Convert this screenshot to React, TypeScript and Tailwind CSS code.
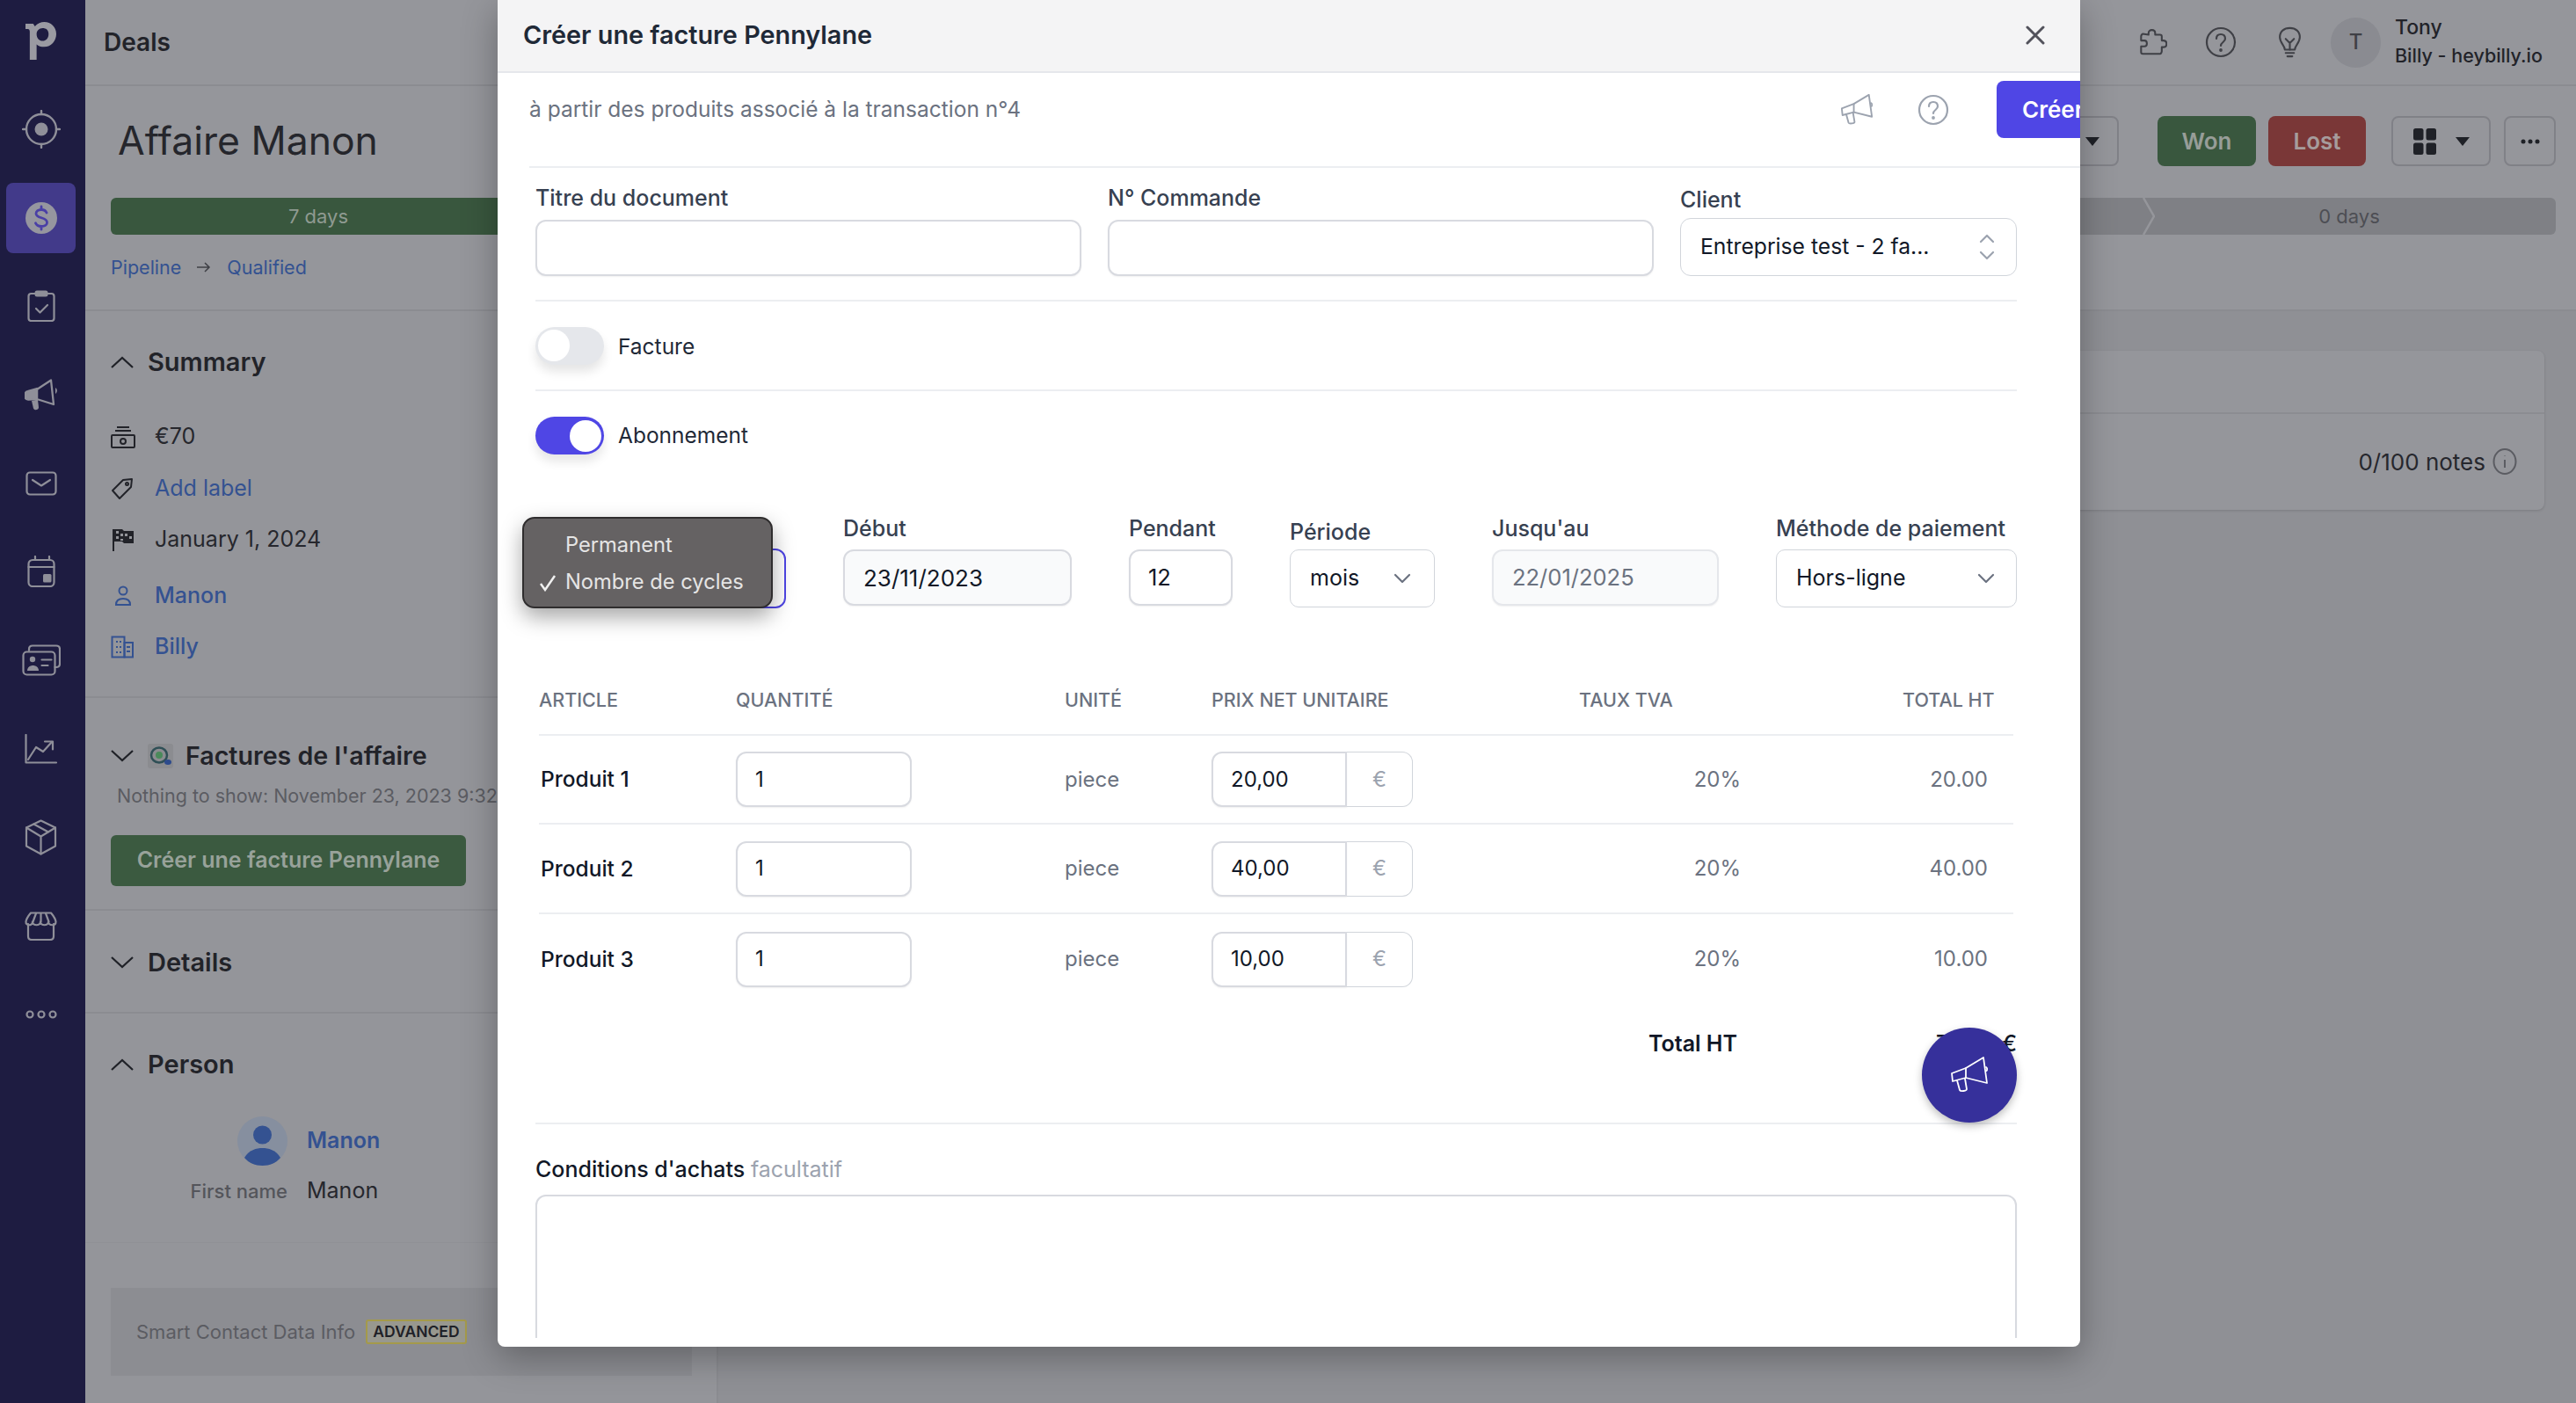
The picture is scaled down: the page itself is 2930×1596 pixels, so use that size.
import React from "react";

const S = ({ w, h, vb, cls, children, sw = 2 }: any) => (
  <svg width={w} height={h} viewBox={vb} fill="none" stroke="currentColor" strokeWidth={sw} strokeLinecap="round" strokeLinejoin="round" className={cls}>
    {children}
  </svg>
);

const Logo = () => (
  <svg width="35" height="43" viewBox="0 0 36 44" className="text-[#9a9aa2]" fill="currentColor">
    <path fillRule="evenodd" d="M0 2h9l2 3c3-3 7-5 11-5 8 0 14 6 14 14s-6 15-14 15c-4 0-7-1-9-3v18H5V11c0-2-1-3-2-3H0V2zm13 12c0 5 3 8 7 8s7-3 7-8-3-7-7-7-7 3-7 7z" />
  </svg>
);

const NAV = [
  <S w={44} h={44} vb="0 0 44 44" key="t" sw={2.4}>
    <circle cx="22" cy="22" r="17" />
    <circle cx="22" cy="22" r="7.500" fill="currentColor" stroke="none" />
    <path d="M22 1v4M22 39v4M1 22h4M39 22h4" />
  </S>,
  <svg width="36" height="36" viewBox="0 0 36 36" key="d">
    <circle cx="18" cy="18" r="18" fill="#96969f" />
    <path d="M24 12c-1-2.500-3-3.500-6-3.500-3.500 0-6 1.800-6 4.500 0 6 12.500 3.500 12.500 10 0 2.800-2.800 4.500-6.500 4.500-3.200 0-5.500-1.200-6.500-3.800M18 5v3.500M18 27.500V31" fill="none" stroke="#4a3fa6" strokeWidth="2.800" strokeLinecap="round" />
  </svg>,
  <S w={32} h={36} vb="0 0 32 36" key="c" sw={2.2}>
    <path d="M9 4H4.500C2.800 4 1.500 5.300 1.500 7v25c0 1.700 1.300 3 3 3h23c1.700 0 3-1.300 3-3V7c0-1.700-1.300-3-3-3H23" />
    <rect x="8.500" y="0.500" width="15" height="7" rx="2.500" fill="currentColor" stroke="none" />
    <path d="M10 21l4.500 4.500L23 17" />
  </S>,
  <svg width="38" height="36" viewBox="0 0 38 36" key="m" fill="none" stroke="currentColor" strokeWidth="2.300" strokeLinejoin="round">
    <path d="M14 12L30 1.500 33 29l-19-6z" />
    <path d="M14 11L3.500 14C1.500 14.500 0.500 16 0.500 18v2c0 2 1.500 3.500 3.500 3.500L14 23z" fill="currentColor" />
    <path d="M8 25l7-1.500 1 9c0 3-5 4-6 1z" fill="currentColor" stroke="none" />
    <path d="M35 10c2.500 1.500 2.500 5 0 7z" fill="currentColor" stroke="none" />
  </svg>,
  <S w={36} h={28} vb="0 0 36 28" key="e" sw={2.2}>
    <rect x="1.500" y="1.500" width="33" height="25" rx="3.500" />
    <path d="M8 10l10 6.500L28 10" />
  </S>,
  <S w={32} h={36} vb="0 0 32 36" key="cal" sw={2.2}>
    <rect x="1.500" y="5" width="29" height="30" rx="4.500" />
    <path d="M1.500 13h29M9 1V5M25 1V5" />
    <rect x="18" y="21" width="9.500" height="9.500" rx="1.500" fill="currentColor" stroke="none" />
  </S>,
  <S w={44} h={36} vb="0 0 44 36" key="id" sw={2.2}>
    <path d="M8 7V5.500C8 3 9.500 1.500 12 1.500H39c2.500 0 4 1.500 4 4V22c0 2.500-1.500 4-4 4h-1.500" />
    <rect x="1.500" y="8.500" width="36" height="26" rx="4" />
    <circle cx="12" cy="17" r="3.200" fill="currentColor" stroke="none" />
    <path d="M6 30c0-8 13-8 13 0z" fill="currentColor" stroke="none" />
    <path d="M22.500 17.500h11M22.500 24h7" />
  </S>,
  <S w={38} h={34} vb="0 0 38 34" key="ch" sw={2.2}>
    <path d="M1.500 1V32.500H36" />
    <path d="M4 29l9-14 8 5 10-11" />
    <path d="M23 8.500h9v9" />
  </S>,
  <S w={37} h={41} vb="0 0 37 41" key="b" sw={2.2}>
    <path d="M18.500 1.500l16.500 8v21l-16.500 9-16.500-9v-21z" />
    <path d="M2 9.500l16.500 10 16.500-10M18.500 19.500v20M10.500 5.500l16.500 9" />
  </S>,
  <S w={37} h={33} vb="0 0 37 33" key="s" sw={2.2}>
    <path d="M4 14v14c0 2.500 1.500 4 4 4h21c2.500 0 4-1.500 4-4V14" />
    <path d="M7 1.500h23c2.500 3 5 6 5.500 10 0 5-8 5-8.500 0 0 5-9 5-9 0 0 5-9 5-9 0C9 16.500 1 16.500 1.500 11.500 2 7.500 4.500 4.500 7 1.500z" />
    <path d="M13 2l-3.500 9.500M18.500 2v9.500M24 2l3.500 9.500" />
  </S>,
  <S w={36} h={10} vb="0 0 36 10" key="o" sw={2.2}>
    <circle cx="5" cy="5" r="3.500" />
    <circle cx="18" cy="5" r="3.500" />
    <circle cx="31" cy="5" r="3.500" />
  </S>,
];

const Chev = ({ up }: { up?: boolean }) => (
  <svg width="26" height="14" viewBox="0 0 26 14" fill="none" stroke="#1f2127" strokeWidth="2.2" className="shrink-0">
    <path d={up ? "M1 13L13 2l12 11" : "M1 1l12 11L25 1"} />
  </svg>
);

const MiniChev = () => (
  <svg width="20" height="12" viewBox="0 0 20 12" fill="none" stroke="#6b7280" strokeWidth="2.2" strokeLinecap="round" strokeLinejoin="round">
    <path d="M2 2l8 8 8-8" />
  </svg>
);

const Megaphone = ({ cls, w = 34, h = 34, sw = 2 }: any) => (
  <svg width={w} height={h} viewBox="0 0 42 42" fill="none" stroke="currentColor" strokeWidth={sw} strokeLinejoin="round" strokeLinecap="round" className={cls}>
    <path d="M1 19l16-6L37 1l4 29-24-6-15 4z" />
    <path d="M17 13v11" />
    <path d="M7 27l3 11c1 2 8 1 8-1l-2-12" />
    <path d="M40 12c1.500 1 1.500 3 .500 4" />
  </svg>
);

const Question = ({ cls, size = 36, sw = 2.2 }: any) => (
  <svg width={size} height={size} viewBox="0 0 36 36" fill="none" stroke="currentColor" strokeWidth={sw} strokeLinecap="round" className={cls}>
    <circle cx="18" cy="18" r="16" />
    <path d="M13 14c0-3 2-5 5-5s5 2 5 5c0 4-5 4-5 8" />
    <circle cx="18" cy="27" r="0.8" fill="currentColor" />
  </svg>
);

const SummaryRow = ({ icon, text, link, medium, cls }: any) => (
  <div className={`flex h-[40px] items-center ${cls}`}>
    <div className="flex w-[50px] shrink-0 items-center">{icon}</div>
    <span className={`text-[25px] ${link ? "text-[#345291]" : "text-[#26272d]"} ${medium ? "font-medium" : ""}`}>{text}</span>
  </div>
);

const SectionHead = ({ title, up, cls }: any) => (
  <div className={`flex h-[40px] items-center ${cls}`}>
    <Chev up={up} />
    <span className="ml-[16px] text-[29px] font-semibold text-[#222329]">{title}</span>
  </div>
);

const Label = ({ children, cls = "" }: any) => <div className={`h-[30px] text-[25px] font-medium leading-[30px] text-[#374151] ${cls}`}>{children}</div>;

const boxCls = "rounded-[12px] border-2 border-[#d8dae0] bg-white shadow-[0_1px_2px_rgba(0,0,0,0.06)]";

const FieldInput = ({ cls = "", text, tcls = "text-[#111827]", pl = "pl-[21px]", size = "text-[24px]" }: any) => (
  <div className={`flex items-center ${boxCls} ${pl} ${size} ${tcls} ${cls}`}>{text}</div>
);

const Toggle = ({ on, label, lcls = "" }: any) => (
  <div className="flex items-center">
    <div className={`flex h-[43px] w-[78px] items-center rounded-full px-[3px] shadow-[0_8px_12px_rgba(0,0,0,0.10)] ${on ? "justify-end bg-[#4f46e5]" : "justify-start bg-[#e5e7eb]"}`}>
      <div className="h-[36px] w-[36px] rounded-full bg-white" />
    </div>
    <span className={`ml-[16px] text-[24.500px] text-[#1f2937] ${lcls}`}>{label}</span>
  </div>
);

const ROWS = [
  { name: "Produit 1", price: "20,00", total: "20.00", h: "h-[101px]" },
  { name: "Produit 2", price: "40,00", total: "40.00", h: "h-[102px]" },
  { name: "Produit 3", price: "10,00", total: "10.00", h: "h-[102px]" },
];

export default function App() {
  return (
    <div className="relative flex h-[1596px] w-[2930px] overflow-hidden bg-[#8f9095] font-['Inter',sans-serif]">
      {/* Sidebar */}
      <aside className="flex w-[97px] shrink-0 flex-col bg-[#1e1c41] pl-[7px] text-[#8f8f99]">
        <div className="flex h-[107px] w-[79px] items-start justify-center pt-[25px]">
          <Logo />
        </div>
        <nav className="flex w-[79px] flex-col items-center gap-[20.7px]">
          {NAV.map((ic, i) => (
            <div key={i} className={`flex h-[80px] w-[79px] items-center justify-center rounded-[8px] ${i === 1 ? "bg-[#423a8a]" : ""}`}>
              {ic}
            </div>
          ))}
        </nav>
      </aside>

      {/* Main */}
      <div className="flex min-w-0 flex-1 flex-col">
        <header className="flex h-[98px] shrink-0 items-center justify-between border-b-2 border-[#8b8c91] bg-[#95969b] pl-[21px] pr-[38px]">
          <span className="text-[28px] font-semibold text-[#222329]">Deals</span>
          <div className="flex items-center">
            <svg width="33" height="32" viewBox="0 0 34 34" fill="none" stroke="#3f4046" strokeWidth="2.2" strokeLinejoin="round">
              <path d="M12 8V6c0-5 8-5 8 0v2h6c1 0 2 1 2 2v5h2c5 0 5 8 0 8h-2v5c0 1-1 3-2 3H5c-1 0-2-1-2-2v-7h4c4 0 4-7 0-7H3v-5c0-1 1-3 2-3z" />
            </svg>
            <Question cls="ml-[43px] text-[#3f4046]" size={36} />
            <svg className="ml-[47px]" width="27" height="36" viewBox="0 0 28 38" fill="none" stroke="#3f4046" strokeWidth="2.2" strokeLinecap="round" strokeLinejoin="round">
              <path d="M8 28c0-5-6-8-6-15C2 6 7 2 14 2s12 4 12 11c0 7-6 10-6 15z" />
              <path d="M9 15l5 5 5-5M14 20v8M9 32h10M11 36h6" />
            </svg>
            <div className="ml-[33px] flex h-[57px] w-[57px] items-center justify-center rounded-full bg-[#8a8b91] text-[24px] font-medium text-[#3f4046]">T</div>
            <div className="mb-[2px] ml-[16px] flex w-[168px] flex-col gap-[8px]">
              <span className="text-[23px] font-medium leading-[24px] text-[#222329]">Tony</span>
              <span className="whitespace-nowrap text-[21.500px] font-medium leading-[24px] text-[#222329]">Billy - heybilly.io</span>
            </div>
          </div>
        </header>

        <section className="h-[256px] shrink-0 border-b-2 border-[#8b8c91] bg-[#95969b] pl-[29px] pr-[23px] pt-[34px]">
          <div className="flex h-[57px] items-center justify-between">
            <h1 className="ml-[8px] text-[44.500px] font-normal text-[#25262c]">Affaire Manon</h1>
            <div className="flex h-[57px] items-center">
              <div className="flex h-[57px] w-[60px] items-center justify-center rounded-[8px] border-2 border-[#808187]">
                <svg width="16" height="10" viewBox="0 0 16 10" fill="#1f2127"><path d="M0 0h16L8 10z" /></svg>
              </div>
              <button className="ml-[44px] h-[57px] w-[112px] rounded-[8px] bg-[#39573e] text-[26px] font-semibold text-[#979d98]">Won</button>
              <button className="ml-[14px] h-[57px] w-[111px] rounded-[8px] bg-[#7a3737] text-[26px] font-semibold text-[#a69c9c]">Lost</button>
              <div className="ml-[29px] flex h-[57px] w-[113px] items-center justify-center gap-[22px] rounded-[8px] border-2 border-[#808187]">
                <svg width="26" height="30" viewBox="0 0 26 30" fill="#1f2127">
                  <rect width="11.500" height="13.500" rx="2.500" />
                  <rect x="14.500" width="11.500" height="13.500" rx="2.500" />
                  <rect y="16.500" width="11.500" height="13.500" rx="2.500" />
                  <rect x="14.500" y="16.500" width="11.500" height="13.500" rx="2.500" />
                </svg>
                <svg width="16" height="10" viewBox="0 0 16 10" fill="#1f2127"><path d="M0 0h16L8 10z" /></svg>
              </div>
              <div className="ml-[15px] flex h-[57px] w-[59px] items-center justify-center rounded-[8px] border-2 border-[#808187]">
                <svg width="22" height="6" viewBox="0 0 22 6" fill="#1f2127"><circle cx="3" cy="3" r="2.500" /><circle cx="11" cy="3" r="2.500" /><circle cx="19" cy="3" r="2.500" /></svg>
              </div>
            </div>
          </div>
          <div className="mt-[36px] flex h-[42px] overflow-hidden rounded-[6px] text-[22px]">
            <div className="flex w-[472px] items-center justify-center bg-[#39573e] text-[#8f9a91]">7 days</div>
            <div className="flex-1 bg-[#7f8085]" />
            <div className="relative flex w-[470px] items-center justify-center bg-[#7f8085] text-[#4d4e54]">
              <svg width="14" height="42" viewBox="0 0 14 42" fill="none" stroke="#95969b" strokeWidth="2.500" className="absolute left-0 top-0">
                <path d="M1 0l12 21L1 42" />
              </svg>
              0 days
            </div>
          </div>
          <div className="mt-[22px] flex h-[30px] items-center text-[21.500px] text-[#345291]">
            <span>Pipeline</span>
            <svg className="mx-[18px]" width="16" height="12" viewBox="0 0 16 12" fill="none" stroke="#3f4046" strokeWidth="1.500"><path d="M0 6h14M9 1l5 5-5 5" /></svg>
            <span>Qualified</span>
          </div>
        </section>

        <div className="flex min-h-0 flex-1">
          {/* Left column */}
          <div className="flex w-[720px] shrink-0 flex-col border-r-2 border-[#8b8c91] bg-[#94959a]">
            <div className="h-[440px] border-b-2 border-[#8b8c91] pl-[29px] pt-[38px]">
              <SectionHead title="Summary" up />
              <SummaryRow
                cls="mt-[45px]"
                text="€70"
                icon={
                  <svg width="28" height="26" viewBox="0 0 28 26" fill="none" stroke="#222329" strokeWidth="2"><path d="M7 2h14M5 6h18" /><rect x="1" y="11" width="26" height="14" rx="1" /><circle cx="14" cy="18" r="3" /></svg>
                }
              />
              <SummaryRow
                cls="mt-[19px]"
                text="Add label"
                link
                icon={
                  <svg width="26" height="26" viewBox="0 0 26 26" fill="none" stroke="#222329" strokeWidth="2" strokeLinejoin="round"><path d="M2 15L14 3l10-1-1 9-13 13z" /><circle cx="18.500" cy="7.500" r="1.500" /></svg>
                }
              />
              <SummaryRow
                cls="mt-[18px]"
                text="January 1, 2024"
                icon={
                  <svg width="26" height="28" viewBox="0 0 26 28" fill="#222329"><path d="M2 2h2v25H2z" /><path fillRule="evenodd" d="M4 2h9l2 2h11v14H15l-2-2H4zM6 4v3h3V4zm5 3v3h3V7zm-5 3v3h3v-3zm10-3v3h3V7zm5 3v3h3v-3zm-10 3v2h3v-2z" /></svg>
                }
              />
              <SummaryRow
                cls="mt-[24px]"
                text="Manon"
                link
                medium
                icon={
                  <svg className="ml-[4px]" width="20" height="24" viewBox="0 0 20 24" fill="none" stroke="#345291" strokeWidth="2"><circle cx="10" cy="6" r="4.500" /><path d="M2 22c0-4 2-7 8-7s8 3 8 7z" /></svg>
                }
              />
              <SummaryRow
                cls="mt-[18px]"
                text="Billy"
                link
                medium
                icon={
                  <svg width="26" height="26" viewBox="0 0 26 26" fill="none" stroke="#345291" strokeWidth="2"><rect x="1.500" y="1.500" width="14" height="23" /><rect x="15.500" y="8" width="9.500" height="16.500" /><path d="M6 7h2M10 7h2M6 13h2M10 13h2M6 19h2M10 19h2M18 13h4M18 18h4" /></svg>
                }
              />
            </div>

            <div className="h-[242px] border-b-2 border-[#8b8c91] pl-[29px] pt-[46px]">
              <div className="flex h-[40px] items-center">
                <Chev />
                <div className="ml-[16px] flex h-[28px] w-[29px] items-center justify-center rounded-[3px] bg-[#8b8c90]">
                  <svg width="26" height="24" viewBox="0 0 26 24">
                    <ellipse cx="11" cy="11" rx="9" ry="8.500" fill="none" stroke="#2f4f56" strokeWidth="2.500" />
                    <ellipse cx="11" cy="11" rx="4" ry="4" fill="#4a8a5a" />
                    <ellipse cx="21" cy="19" rx="4" ry="3" fill="#2c4a8c" />
                  </svg>
                </div>
                <span className="ml-[14px] text-[28.600px] font-semibold text-[#222329]">Factures de l'affaire</span>
              </div>
              <div className="ml-[7px] mt-[10px] h-[30px] whitespace-nowrap text-[21.500px] leading-[30px] text-[#5b5c62]">Nothing to show: November 23, 2023 9:32</div>
              <button className="mt-[30px] h-[58px] w-[404px] rounded-[6px] bg-[#3b5a40] text-[25px] font-semibold text-[#98a29a]">Créer une facture Pennylane</button>
            </div>

            <div className="h-[117px] border-b-2 border-[#8b8c91] pl-[29px] pt-[39px]">
              <SectionHead title="Details" />
            </div>

            <div className="h-[261px] border-b border-[#8f9095] pl-[29px] pt-[38px]">
              <SectionHead title="Person" up />
              <div className="mt-[39px] flex h-[56px]">
                <div className="flex w-[201px] justify-end">
                  <svg width="57" height="56" viewBox="0 0 57 56">
                    <ellipse cx="28.500" cy="28" rx="28.500" ry="28" fill="#868f9f" />
                    <ellipse cx="28.500" cy="21" rx="10.500" ry="10.500" fill="#345291" />
                    <path d="M8 47c5-9 14-11 20.500-11S44 38 49 47c-5 6-12 9-20.500 9S13 53 8 47z" fill="#345291" />
                  </svg>
                </div>
                <div className="ml-[22px] flex items-center text-[25px] font-semibold text-[#345291]">Manon</div>
              </div>
              <div className="mt-[14px] flex h-[30px] items-center">
                <div className="w-[201px] text-right text-[22px] font-medium text-[#54555b]">First name</div>
                <div className="ml-[22px] text-[25px] text-[#26272d]">Manon</div>
              </div>
            </div>

            <div className="ml-[29px] mt-[51px] flex h-[100px] w-[661px] items-center bg-[#8c8d92] pl-[29px]">
              <span className="text-[22px] text-[#5b5c62]">Smart Contact Data Info</span>
              <span className="ml-[12px] flex h-[28px] items-center rounded-[3px] border-2 border-[#a49a4a] bg-[#98988f] px-[6px] text-[17.500px] font-semibold text-[#1f2127]">ADVANCED</span>
            </div>
          </div>

          {/* Right column */}
          <div className="min-w-0 flex-1 bg-[#8f9095] pl-[30px] pr-[36px] pt-[45px]">
            <div className="h-[181px] rounded-[8px] bg-[#95969b] shadow-[0_1px_3px_rgba(0,0,0,0.15)]">
              <div className="h-[72px] border-b-2 border-[#8b8c91]" />
              <div className="flex h-[108px] items-center justify-end pr-[31px]">
                <span className="text-[26px] text-[#26272d]">0/100 notes</span>
                <svg className="ml-[8px]" width="28" height="32" viewBox="0 0 28 32" fill="none" stroke="#5b5c62" strokeWidth="2"><ellipse cx="14" cy="16" rx="12.500" ry="14" /><path d="M14 14v9M14 9v.5" /></svg>
              </div>
            </div>
          </div>
        </div>
      </div>

      {/* Modal */}
      <div className="absolute left-[566px] top-0 z-10 flex h-[1532px] w-[1800px] flex-col overflow-hidden rounded-b-[8px] bg-white pb-[10px] shadow-[0_12px_40px_rgba(0,0,0,0.30)]">
        <div className="flex h-[83px] shrink-0 items-center justify-between border-b-2 border-[#e5e7eb] bg-[#f4f4f5] pb-[2px] pl-[29px] pr-[40px]">
          <h2 className="text-[28.800px] font-semibold text-[#1f2937]">Créer une facture Pennylane</h2>
          <svg width="22" height="22" viewBox="0 0 22 22" fill="none" stroke="#52525b" strokeWidth="3" strokeLinecap="round"><path d="M2 2l18 18M20 2L2 20" /></svg>
        </div>

        <div className="ml-[36px] flex h-[108px] shrink-0 items-center border-b-2 border-[#eceef1] pb-[23px]">
          <div className="w-[1492px] shrink-0 text-[24.500px] text-[#6b7280]">à partir des produits associé à la transaction n°4</div>
          <Megaphone cls="shrink-0 text-[#9ca3af]" w={36} h={36} sw={2.2} />
          <Question cls="ml-[51px] shrink-0 text-[#9ca3af]" />
          <button className="ml-[54px] h-[65px] w-[130px] shrink-0 rounded-[8px] bg-[#4f46e5] pl-[29px] text-left text-[26px] font-semibold text-white">Créer</button>
        </div>

        <div className="min-h-0 flex-1 overflow-hidden pl-[43px] pr-[72px]">
          {/* Row 1 */}
          <div className="flex h-[152px] gap-[30px] border-b-2 border-[#eceef1]">
            <div className="w-[621px] pt-[19px]">
              <Label>Titre du document</Label>
              <div className={`mt-[10px] h-[64px] ${boxCls}`} />
            </div>
            <div className="w-[621px] pt-[19px]">
              <Label>N° Commande</Label>
              <div className={`mt-[10px] h-[64px] ${boxCls}`} />
            </div>
            <div className="w-[383px] pt-[21px]">
              <Label>Client</Label>
              <div className="mt-[6px] flex h-[66px] items-center justify-between rounded-[12px] border border-[#d1d5db] pl-[22px] pr-[24px]">
                <span className="text-[24.700px] text-[#111827]">Entreprise test - 2 fa...</span>
                <svg width="18" height="36" viewBox="0 0 18 36" fill="none" stroke="#9ca3af" strokeWidth="2.200" strokeLinecap="round" strokeLinejoin="round"><path d="M2 12l7-7 7 7M2 24l7 7 7-7" /></svg>
              </div>
            </div>
          </div>

          {/* Toggles */}
          <div className="flex h-[102px] items-center border-b-2 border-[#eceef1]">
            <Toggle label="Facture" lcls="pt-[2px]" />
          </div>
          <div className="pt-[29px]">
            <Toggle on label="Abonnement" />
          </div>

          {/* Subscription */}
          <div className="flex gap-[65px] pt-[69px]">
            <div className="relative w-[285px] shrink-0">
              <div className="mt-[38px] h-[68px] rounded-[12px] border-2 border-[#4f46e5]" />
              <div className="absolute left-[-15px] top-[2px] flex h-[104px] w-[285px] flex-col justify-center gap-[12px] rounded-[14px] border-2 border-[#2f2d2e] bg-[#656263] pt-[2px] shadow-[0_10px_24px_rgba(0,0,0,0.35)]">
                <div className="h-[30px] pl-[47px] text-[23.700px] leading-[30px] text-[#e5e5e5]">Permanent</div>
                <div className="relative h-[30px] pl-[47px] text-[23.700px] leading-[30px] text-[#e5e5e5]">
                  <svg className="absolute left-[17px] top-[6px]" width="20" height="20" viewBox="0 0 20 20" fill="none" stroke="#f0f0f0" strokeWidth="2.500"><path d="M2 11l5 7L18 2" /></svg>
                  Nombre de cycles
                </div>
              </div>
            </div>
            <div className="w-[260px] shrink-0">
              <Label>Début</Label>
              <FieldInput cls="mt-[9px] h-[64px] !bg-[#f9fafb]" text="23/11/2023" size="text-[26px]" />
            </div>
            <div className="w-[118px] shrink-0">
              <Label>Pendant</Label>
              <FieldInput cls="mt-[9px] h-[64px]" text="12" pl="pl-[20px]" size="text-[25.500px]" />
            </div>
            <div className="w-[165px] shrink-0">
              <Label cls="mt-[4px]">Période</Label>
              <div className="mt-[5px] flex h-[66px] items-center justify-between rounded-[10px] border border-[#d1d5db] pl-[22px] pr-[26px] text-[25px] text-[#111827]">
                mois <MiniChev />
              </div>
            </div>
            <div className="w-[258px] shrink-0">
              <Label>Jusqu'au</Label>
              <FieldInput cls="mt-[9px] h-[64px] !border-[#e5e7eb] !bg-[#f9fafb]" text="22/01/2025" tcls="text-[#6b7280]" size="text-[25.500px]" />
            </div>
            <div className="w-[274px] shrink-0">
              <Label>Méthode de paiement</Label>
              <div className="mt-[9px] flex h-[66px] items-center justify-between rounded-[10px] border border-[#d1d5db] pl-[22px] pr-[24px] text-[25px] text-[#111827]">
                Hors-ligne <MiniChev />
              </div>
            </div>
          </div>

          {/* Table */}
          <div className="ml-[4px] mr-[4px] mt-[84px]">
            <div className="flex h-[61px] border-b-2 border-[#eceef1] pb-[20px] text-[21.500px] font-medium text-[#6b7280]">
              <div className="flex h-[40px] w-[224px] items-center">ARTICLE</div>
              <div className="flex h-[40px] w-[374px] items-center">QUANTITÉ</div>
              <div className="flex h-[40px] w-[167px] items-center">UNITÉ</div>
              <div className="flex h-[40px] w-[418px] items-center">PRIX NET UNITAIRE</div>
              <div className="flex h-[40px] w-[368px] items-center">TAUX TVA</div>
              <div className="flex h-[40px] items-center">TOTAL HT</div>
            </div>
            {ROWS.map((r, i) => (
              <div key={r.name} className={`flex items-center ${r.h} ${i < 2 ? "border-b-2 border-[#eceef1]" : ""}`}>
                <div className="w-[224px] pl-[2px] text-[24.500px] font-medium text-[#111827]">{r.name}</div>
                <div className="w-[374px]">
                  <FieldInput cls="h-[63px] w-[200px]" text="1" pl="pl-[20px]" />
                </div>
                <div className="w-[167px] text-[24px] text-[#6b7280]">piece</div>
                <div className="flex w-[229px]">
                  <div className={`flex h-[63px] w-[154px] items-center pl-[20px] text-[24px] text-[#111827] ${boxCls} !rounded-r-none`}>{r.price}</div>
                  <div className="flex h-[63px] w-[75px] items-center justify-center rounded-r-[12px] border border-l-0 border-[#d1d5db] text-[24px] text-[#9ca3af]">€</div>
                </div>
                <div className="w-[373px] text-right text-[24px] text-[#6b7280]">20%</div>
                <div className="w-[281px] text-right text-[24px] text-[#6b7280]">{r.total}</div>
              </div>
            ))}
          </div>

          {/* Total */}
          <div className="relative h-[137px] border-b-2 border-[#eceef1] pt-[26px]">
            <div className="flex h-[40px] items-center">
              <div className="w-[1367px] text-right text-[25px] font-semibold text-[#111827]">Total HT</div>
              <div className="flex-1 text-right text-[25px] font-medium text-[#111827]">70,00 €</div>
            </div>
            <div className="absolute bottom-0 right-0 flex h-[108px] w-[108px] items-center justify-center rounded-full bg-[#36309b] shadow-[0_4px_10px_rgba(0,0,0,0.25)]">
              <Megaphone cls="text-white" w={42} h={42} sw={1.800} />
            </div>
          </div>

          {/* Conditions */}
          <div className="mt-[36px] h-[30px] text-[25px] font-medium leading-[30px] text-[#111827]">
            Conditions d'achats <span className="font-normal text-[#9ca3af]">facultatif</span>
          </div>
          <div className={`mt-[14px] h-[240px] ${boxCls}`} />
        </div>
      </div>
    </div>
  );
}
